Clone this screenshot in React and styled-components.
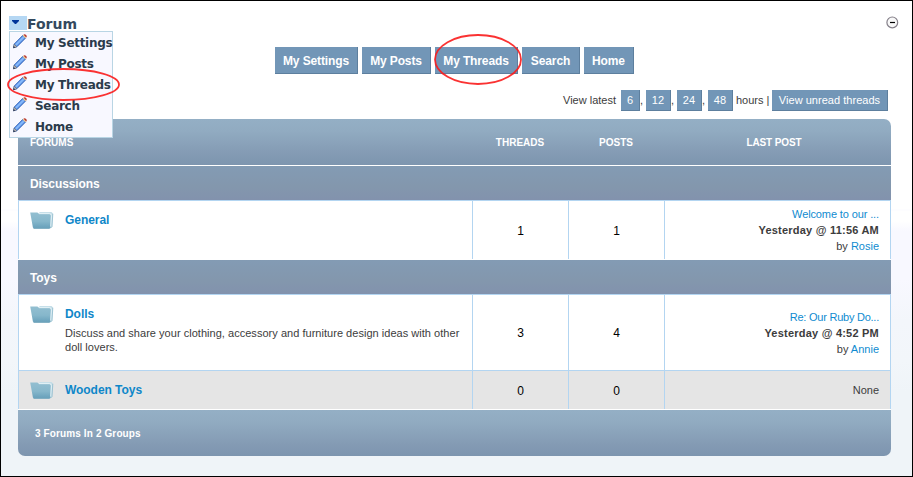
import React from 'react';
import styled, { createGlobalStyle } from 'styled-components';

const Global = createGlobalStyle`
  * { box-sizing: border-box; }
  body { margin: 0; background: #fff; }
`;

const Page = styled.main`
  position: relative;
  width: 913px;
  height: 477px;
  border: 1px solid #000;
  padding: 14px 21px 0 17px;
  overflow: hidden;
  font-family: "Liberation Sans", Arial, sans-serif;
  color: #3c3c3c;
  background: linear-gradient(#fff 0 208px, #fbfbff 209px, #fff 210px 220px, #f8f8ff 230px 278px, #f3f6fb 320px, #f2f6fa 360px, #eff4f8 390px);
`;

const TitleBar = styled.header`
  display: flex;
  align-items: center;
  height: 16px;
  margin: 0 -8px 0 -9px;
`;

const MenuToggle = styled.button`
  width: 18px;
  height: 14px;
  margin: 0;
  padding: 0;
  border: 0;
  background: #b5d7f3;
  display: flex;
  align-items: flex-start;
  justify-content: flex-start;
`;

const Title = styled.h1`
  flex: 1;
  margin: 1px 0 0;
  font: bold 14px/16px "DejaVu Sans", sans-serif;
  letter-spacing: 0;
  color: #34495e;
`;

const Menu = styled.ul`
  position: absolute;
  left: 8px;
  top: 30px;
  z-index: 2;
  width: 104px;
  height: 107px;
  margin: 0;
  padding: 0;
  list-style: none;
  background: #f8f8ff;
  border: 1px solid #b9d5e4;
`;

const MenuItem = styled.li`
  display: flex;
  align-items: flex-start;
  gap: 8px;
  height: 21px;
  padding: 1px 0 0 3px;
  white-space: nowrap;
  font: bold 12px/21px "DejaVu Sans", sans-serif;
  letter-spacing: -0.3px;
  color: #2b3b4b;

  svg {
    flex: none;
    margin-top: 1px;
  }
`;

const Nav = styled.nav`
  display: flex;
  gap: 4px;
  margin: 16px 0 0 257px;
`;

const NavButton = styled.button`
  width: ${(p) => p.$width}px;
  height: 27px;
  padding: 1px 0 0;
  border: 0;
  border-right: 1px solid #5d7f9e;
  border-bottom: 1px solid #5d7f9e;
  background: #7296b7;
  color: #fff;
  font: bold 12px/24px "Liberation Sans", Arial, sans-serif;
  letter-spacing: -0.12px;
  white-space: nowrap;
`;

const Latest = styled.div`
  display: flex;
  justify-content: flex-end;
  margin: 16px 3px 0 0;
  height: 21px;
  font-size: 11px;
  line-height: 20px;
  white-space: pre;
`;

const Caption = styled.span`
  width: ${(p) => p.$width}px;
  padding-left: ${(p) => p.$indent || 0}px;
`;

const HourButton = styled.button`
  width: ${(p) => p.$width}px;
  height: 21px;
  padding: 1px 0 0;
  border: 0;
  border-right: 1px solid #5d7f9e;
  border-bottom: 1px solid #5d7f9e;
  background: #7296b7;
  color: #fff;
  font: 11px/19px "Liberation Sans", Arial, sans-serif;
  letter-spacing: 0.03px;
  white-space: nowrap;
`;

const Board = styled.section`
  width: 873px;
  margin-top: 8px;
  border-radius: 7px;
  overflow: hidden;
`;

const Columns = styled.div`
  display: grid;
  grid-template-columns: 454px 96px 96px 227px;
`;

const HeadRow = styled(Columns)`
  height: 47px;
  border-bottom: 1px solid #fff;
  background: linear-gradient(#94afc5 0, #91abc1 12px, #849bb4 34px, #7d95af);
  color: #fff;
  font: bold 10px/47px "Liberation Sans", Arial, sans-serif;
`;

const HeadCell = styled.div`
  padding-left: ${(p) => (p.$first ? 12 : 0)}px;
  padding-right: ${(p) => (p.$last ? 7 : 0)}px;
  text-align: ${(p) => (p.$first ? 'left' : 'center')};
  letter-spacing: ${(p) => (p.$last ? '-0.1px' : '0')};
`;

const Category = styled.h2`
  height: 34px;
  margin: 0;
  padding: 1px 0 0 12px;
  background: linear-gradient(#839bb4, #8397ad 60%, #8292ad);
  color: #fff;
  font: bold 12px/34px "Liberation Sans", Arial, sans-serif;
  letter-spacing: -0.1px;
`;

const Row = styled(Columns)`
  height: ${(p) => p.$height}px;
  background: ${(p) => (p.$shaded ? '#e5e5e5' : '#fff')};
  border-bottom: ${(p) => (p.$closing ? '1px solid #fff' : '0')};
`;

const Cell = styled.div`
  border-top: 1px solid #b3d5f1;
  border-left: 1px solid #b3d5f1;
  &:last-child { border-right: 1px solid #b3d5f1; }
`;

const ForumCell = styled(Cell)`
  display: flex;
  gap: 11px;
  padding: 10px 0 0 11px;
`;

const ForumText = styled.div`
  padding-top: 2px;
`;

const CountCell = styled(Cell)`
  display: flex;
  align-items: center;
  justify-content: center;
  padding-top: 1px;
  color: #000;
  font-size: 12px;
`;

const LastCell = styled(Cell)`
  display: flex;
  flex-direction: column;
  align-items: flex-end;
  justify-content: center;
  padding-right: 11px;
  font-size: 11px;
  line-height: 16px;
`;

const Topic = styled.a`
  color: #0f8bd0;
  letter-spacing: ${(p) => p.$spacing};
`;

const PostTime = styled.b`
  letter-spacing: 0.22px;
`;

const ForumName = styled.h3`
  margin: 0;
  color: #0f87c9;
  font: bold 12px/14px "Liberation Sans", Arial, sans-serif;
  letter-spacing: -0.05px;
`;

const Description = styled.p`
  margin: 5px 0 0;
  width: 400px;
  font-size: 11px;
  line-height: 14px;
  letter-spacing: 0.03px;
`;

const Link = styled.a`
  color: #0f8bd0;
`;

const Footer = styled.footer`
  height: 46px;
  padding-left: 17px;
  background: linear-gradient(#94afc5 0, #91abc1 12px, #849bb4 34px, #7d95af);
  color: #fff;
  font: bold 10px/47px "Liberation Sans", Arial, sans-serif;
  letter-spacing: 0.12px;
`;

const Marker = styled.svg`
  position: absolute;
  z-index: 3;
  left: ${(p) => p.$x}px;
  top: ${(p) => p.$y}px;
`;

const Arrow = () => (
  <svg width="18" height="14">
    <path d="M3 4h7v1l-3 3h-1l-3-3z" fill="#003399" />
  </svg>
);

const Collapse = () => (
  <svg width="14" height="14" viewBox="0 0 14 14">
    <circle cx="7.3" cy="6.4" r="5.4" fill="#f8f8f8" stroke="#85808a" strokeWidth="1.2" />
    <path d="M5 6.5h5" stroke="#000" strokeWidth="1.2" />
  </svg>
);

const Pencil = () => (
  <svg width="14" height="15" viewBox="0 0 14 15">
    <path d="M.6 13.8 1.2 10 9.8 1.3l2.8 2.8L4 12.7z" fill="#4f86df" stroke="#3161b4" strokeWidth=".8" />
    <path d="m2 10.2 8-8 1.5 1.5-8 8z" fill="#86b8fa" />
    <path d="m.5 13.9.7-3.7 2.6 2.5z" fill="#c9c5bd" stroke="#596273" strokeWidth=".6" />
    <path d="m.3 14 .4-2 1.6 1.5z" fill="#26324d" />
    <path d="m9.6 1.6.9-.9 2.7 2.7-.9.9z" fill="#f3d490" />
    <path d="m10.5.8.6-.6q1.4.1 2.1.9.7.9.5 1.9l-.5.4z" fill="#b9352b" />
  </svg>
);

const Folder = () => (
  <svg width="24" height="19" viewBox="0 0 24 19">
    <defs>
      <linearGradient id="folderFace" x2="0" y2="1">
        <stop stopColor="#93bfd1" />
        <stop offset=".55" stopColor="#86b7cb" />
        <stop offset="1" stopColor="#659eb9" />
      </linearGradient>
    </defs>
    <path d="M8 2.5 10 1h11.5L23 2.4 22.2 16l-2 1.2z" fill="#c3dde7" />
    <path d="M.2 1.4h7.3L9 3.2h10.3q1.5.2 1.6 1.8l-.3 11.6-.9 1H4.1l-1.2-1z" fill="url(#folderFace)" />
    <path d="M9 2.4h10.4q2 .3 2 2.2l-.7 11" fill="none" stroke="#e4f2f7" strokeWidth="1" />
    <path d="M22.8 2.8 22 15.5l-1.7 1.8" fill="none" stroke="#8fbacc" strokeWidth=".8" />
    <path d="M3.5 17.3h16" stroke="#79a9bf" />
  </svg>
);

const Oval = ({ x, y, w, h }) => (
  <Marker $x={x} $y={y} width={w} height={h}>
    <ellipse cx={w / 2} cy={h / 2} rx={w / 2 - 1} ry={h / 2 - 1} fill="none" stroke="#fa1c1c" strokeOpacity=".9" strokeWidth="1.8" />
  </Marker>
);

const Forum = ({ name, text, threads, posts, height, shaded, closing, children }) => (
  <Row $height={height} $shaded={shaded} $closing={closing}>
    <ForumCell>
      <Folder />
      <ForumText>
        <ForumName>{name}</ForumName>
        {text && <Description>{text}</Description>}
      </ForumText>
    </ForumCell>
    <CountCell>{threads}</CountCell>
    <CountCell>{posts}</CountCell>
    <LastCell>{children}</LastCell>
  </Row>
);

const navItems = [['My Settings', 83], ['My Posts', 69], ['My Threads', 83], ['Search', 58], ['Home', 50]];

export default function App() {
  return (
    <Page>
      <Global />
      <TitleBar>
        <MenuToggle aria-label="Open menu"><Arrow /></MenuToggle>
        <Title>Forum</Title>
        <Collapse />
      </TitleBar>
      <Menu>
        {navItems.map(([name]) => (
          <MenuItem key={name}><Pencil />{name}</MenuItem>
        ))}
      </Menu>
      <Nav>
        {navItems.map(([name, width]) => (
          <NavButton key={name} $width={width}>{name}</NavButton>
        ))}
      </Nav>
      <Latest>
        <Caption $width={58}>View latest</Caption>
        <HourButton $width={19}>6</HourButton>
        <Caption $width={6}>,</Caption>
        <HourButton $width={25}>12</HourButton>
        <Caption $width={6}>,</Caption>
        <HourButton $width={25}>24</HourButton>
        <Caption $width={6}>,</Caption>
        <HourButton $width={25}>48</HourButton>
        <Caption $width={39} $indent={3}>hours |</Caption>
        <HourButton $width={116}>View unread threads</HourButton>
      </Latest>
      <Board>
        <HeadRow>
          <HeadCell $first>FORUMS</HeadCell>
          <HeadCell>THREADS</HeadCell>
          <HeadCell>POSTS</HeadCell>
          <HeadCell $last>LAST POST</HeadCell>
        </HeadRow>
        <Category>Discussions</Category>
        <Forum name="General" threads="1" posts="1" height={60} closing>
          <Topic $spacing="-0.12px">Welcome to our ...</Topic>
          <PostTime>Yesterday @ 11:56 AM</PostTime>
          <span>by <Link>Rosie</Link></span>
        </Forum>
        <Category>Toys</Category>
        <Forum
          name="Dolls"
          text="Discuss and share your clothing, accessory and furniture design ideas with other doll lovers."
          threads="3"
          posts="4"
          height={76}
        >
          <Topic $spacing="-0.24px">Re: Our Ruby Do...</Topic>
          <PostTime>Yesterday @ 4:52 PM</PostTime>
          <span>by <Link>Annie</Link></span>
        </Forum>
        <Forum name="Wooden Toys" threads="0" posts="0" height={40} shaded closing>
          <span>None</span>
        </Forum>
        <Footer>3 Forums In 2 Groups</Footer>
      </Board>
      <Oval x={6} y={67} w={113} h={33} />
      <Oval x={433} y={33} w={88} h={51} />
    </Page>
  );
}
